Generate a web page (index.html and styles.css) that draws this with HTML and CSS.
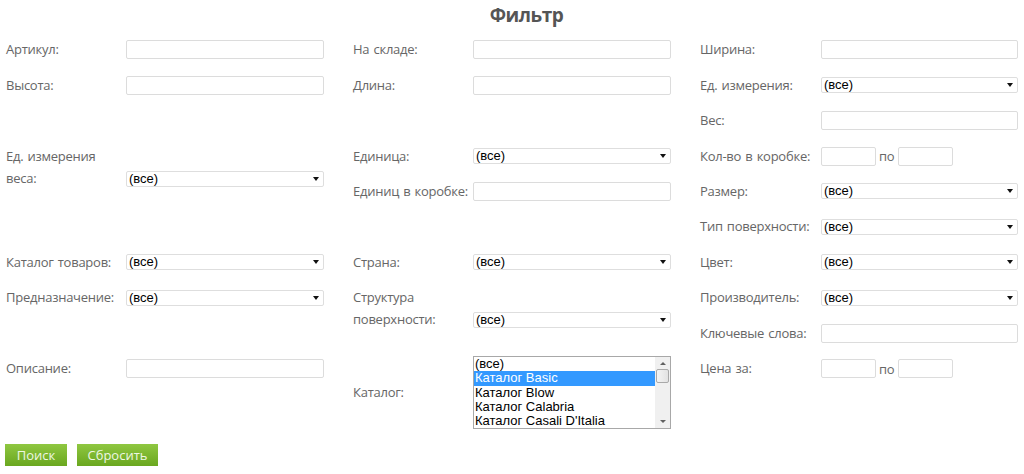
FILE: index.html
```html
<!DOCTYPE html>
<html lang="ru">
<head>
<meta charset="utf-8">
<title>Фильтр</title>
<link rel="stylesheet" href="styles.css">
</head>
<body>
<form class="page">
  <h1 class="title">Фильтр</h1>
  <div class="cols">
    <div class="col">
      <div class="f"><label class="lbl">Артикул:</label><input class="inp" type="text"></div>
      <div class="f"><label class="lbl">Высота:</label><input class="inp" type="text"></div>
      <div class="f"></div>
      <div class="f f2"><label class="lbl">Ед. измерения<br>веса:</label><div class="sel"><span>(все)</span></div></div>
      <div class="f"></div>
      <div class="f"><label class="lbl">Каталог товаров:</label><div class="sel"><span>(все)</span></div></div>
      <div class="f"><label class="lbl">Предназначение:</label><div class="sel"><span>(все)</span></div></div>
      <div class="f"></div>
      <div class="f"><label class="lbl">Описание:</label><input class="inp" type="text"></div>
    </div>
    <div class="col">
      <div class="f"><label class="lbl">На складе:</label><input class="inp" type="text"></div>
      <div class="f"><label class="lbl">Длина:</label><input class="inp" type="text"></div>
      <div class="f"></div>
      <div class="f"><label class="lbl">Единица:</label><div class="sel"><span>(все)</span></div></div>
      <div class="f"><label class="lbl">Единиц в коробке:</label><input class="inp" type="text"></div>
      <div class="f"></div>
      <div class="f"><label class="lbl">Страна:</label><div class="sel"><span>(все)</span></div></div>
      <div class="f f2"><label class="lbl">Структура<br>поверхности:</label><div class="sel"><span>(все)</span></div></div>
      <div class="f flist"><label class="lbl">Каталог:</label>
        <div class="listbox">
          <div class="opts">
            <div class="opt">(все)</div>
            <div class="opt on">Каталог Basic</div>
            <div class="opt">Каталог Blow</div>
            <div class="opt">Каталог Calabria</div>
            <div class="opt">Каталог Casali D'Italia</div>
          </div>
          <div class="sb">
            <span class="arr up"></span>
            <span class="thumb"></span>
            <span class="track"></span>
            <span class="arr down"></span>
          </div>
        </div>
      </div>
    </div>
    <div class="col col3">
      <div class="f"><label class="lbl">Ширина:</label><input class="inp" type="text"></div>
      <div class="f"><label class="lbl">Ед. измерения:</label><div class="sel"><span>(все)</span></div></div>
      <div class="f"><label class="lbl">Вес:</label><input class="inp" type="text"></div>
      <div class="f"><label class="lbl">Кол-во в коробке:</label><input class="inp sm" type="text"><span class="po">по</span><input class="inp sm" type="text"></div>
      <div class="f"><label class="lbl">Размер:</label><div class="sel"><span>(все)</span></div></div>
      <div class="f"><label class="lbl">Тип поверхности:</label><div class="sel"><span>(все)</span></div></div>
      <div class="f"><label class="lbl">Цвет:</label><div class="sel"><span>(все)</span></div></div>
      <div class="f"><label class="lbl">Производитель:</label><div class="sel"><span>(все)</span></div></div>
      <div class="f"><label class="lbl">Ключевые слова:</label><input class="inp" type="text"></div>
      <div class="f"><label class="lbl">Цена за:</label><input class="inp sm" type="text"><span class="po">по</span><input class="inp sm" type="text"></div>
    </div>
  </div>
  <div class="actions">
    <button class="btn b1" type="button">Поиск</button>
    <button class="btn b2" type="button">Сбросить</button>
  </div>
</form>
</body>
</html>
```
FILE: styles.css
```css
body {
  margin: 0;
  background: #fff;
  font-family: "Open Sans", "Noto Sans", sans-serif;
}
.page { margin: 0; }
.title {
  margin: 0;
  height: 32px;
  line-height: 31px;
  padding-left: 29px;
  text-align: center;
  font-size: 19px;
  font-weight: bold;
  letter-spacing: -0.5px;
  color: #555;
}
.cols {
  display: grid;
  grid-template-columns: 318px 318px 318px;
  column-gap: 29px;
  padding-left: 6px;
  align-items: start;
}
.col { display: flex; flex-direction: column; }
.f {
  display: flex;
  align-items: center;
  height: 35.44px;
}
.f2 {
  height: 70.88px;
  align-items: flex-start;
}
.f2 .lbl { padding-top: 6.2px; }
.f2 .sel { margin-top: 32.4px; }
.flist {
  height: auto;
  padding-top: 5px;
}
.lbl {
  width: 120px;
  flex: none;
  font-size: 13px;
  letter-spacing: -0.25px;
  word-spacing: 1px;
  line-height: 22px;
  color: #666;
  padding-bottom: 1px;
  white-space: nowrap;
}
.col3 .lbl { width: 121px; }
.inp {
  flex: 1;
  min-width: 0;
  height: 19px;
  margin: 0;
  box-sizing: border-box;
  border: 1px solid #dcdcdc;
  border-radius: 2px;
  background: #fff;
}
.inp.sm { flex: none; width: 55px; }
.po {
  margin: 0 4px 0 3px;
  font-size: 13px;
  letter-spacing: -0.3px;
  color: #666;
}
.sel {
  flex: 1;
  position: relative;
  height: 16px;
  box-sizing: border-box;
  border: 1px solid #dedede;
  border-radius: 2px;
  background: #fff;
  padding-left: 2px;
  font-family: "Liberation Sans", Arial, sans-serif;
  font-size: 13px;
  line-height: 14px;
  color: #000;
}
.sel::after {
  content: "";
  position: absolute;
  right: 4px;
  top: 5px;
  border-left: 3.5px solid transparent;
  border-right: 3.5px solid transparent;
  border-top: 4px solid #111;
}
.listbox {
  display: flex;
  width: 198px;
  height: 73px;
  box-sizing: border-box;
  border: 1px solid #a8a8a8;
  background: #fff;
}
.opts { flex: 1; overflow: hidden; }
.opt {
  font-family: "Liberation Sans", Arial, sans-serif;
  font-size: 13px;
  line-height: 14.3px;
  padding-left: 1px;
  color: #000;
  white-space: nowrap;
}
.opt.on { background: #3399ff; color: #fff; }
.sb {
  width: 15px;
  flex: none;
  background: #f0f0f0;
  display: flex;
  flex-direction: column;
  align-items: center;
}
.arr {
  width: 0;
  height: 0;
  margin: 5px 0 4px;
  border-left: 3px solid transparent;
  border-right: 3px solid transparent;
}
.arr.up { border-bottom: 3px solid #606060; }
.arr.down { border-top: 3px solid #606060; margin: 4px 0 5px; }
.thumb {
  width: 13px;
  height: 14px;
  box-sizing: border-box;
  border: 1px solid #a9a9a9;
  border-radius: 2px;
  background: linear-gradient(to right, #f4f4f4, #e2e2e2);
}
.track { flex: 1; }
.actions {
  display: flex;
  gap: 10px;
  margin-top: 15px;
  padding-left: 5px;
}
.btn {
  height: 22px;
  border: none;
  padding: 0;
  background: linear-gradient(#8fc741, #6aa71f);
  color: #eef7e3;
  font-family: "Open Sans", "Noto Sans", sans-serif;
  font-size: 13px;
  cursor: pointer;
}
.b1 { width: 62px; }
.b2 { width: 81px; }
```
